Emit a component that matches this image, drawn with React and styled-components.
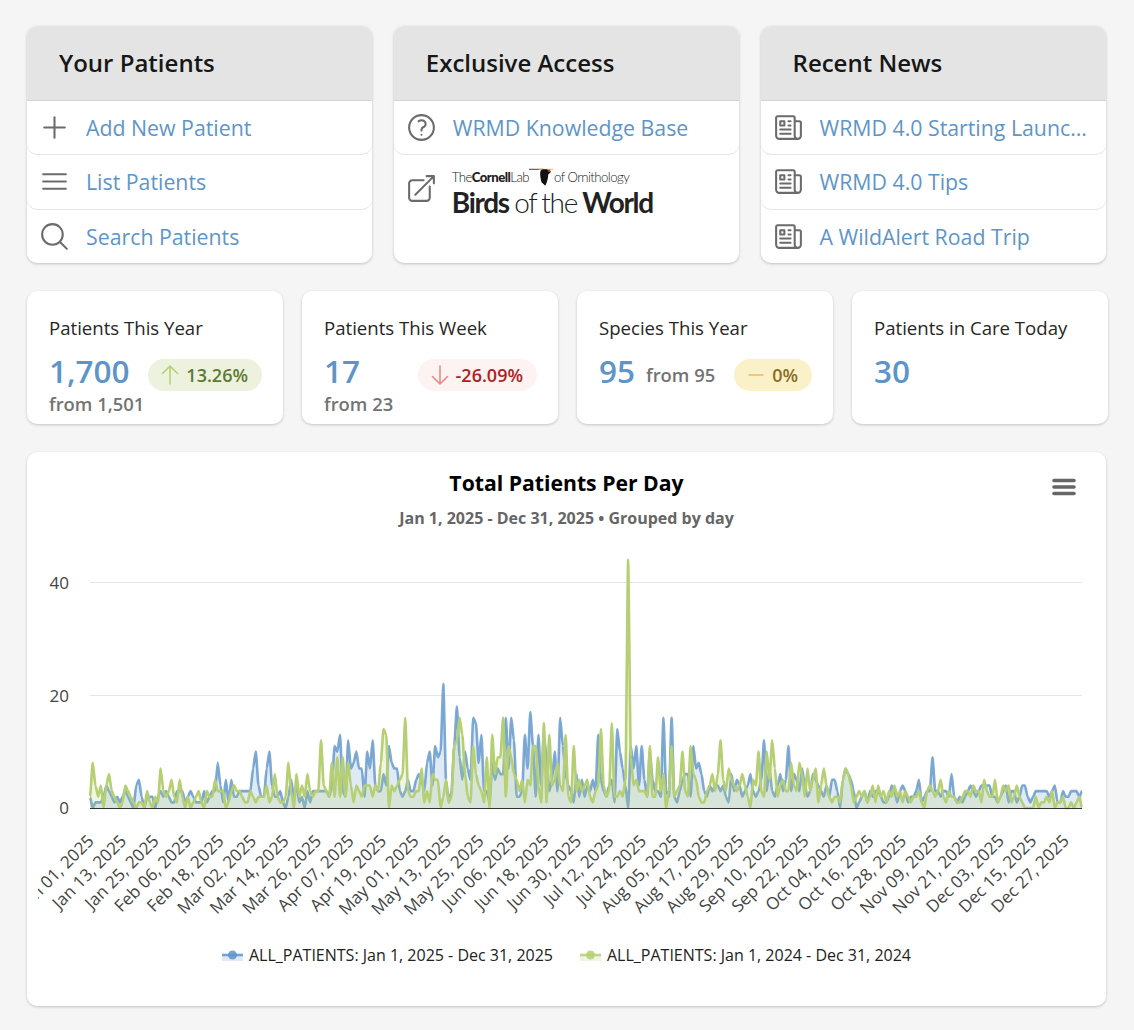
import React from "react";
import styled, { createGlobalStyle } from "styled-components";
import {
  HiOutlinePlus,
  HiOutlineBars3,
  HiOutlineMagnifyingGlass,
  HiOutlineQuestionMarkCircle,
  HiOutlineArrowTopRightOnSquare,
  HiOutlineNewspaper,
  HiOutlineArrowUp,
  HiOutlineArrowDown,
  HiOutlineMinus,
} from "react-icons/hi2";

const GlobalStyle = createGlobalStyle`
  html, body {
    margin: 0;
    background: #f5f5f5;
    font-family: "Open Sans", "Noto Sans", sans-serif;
  }
  * { box-sizing: border-box; }
`;

const Page = styled.div`
  width: 1134px;
  height: 1030px;
  padding: 26px 27px 0;
  display: flex;
  flex-direction: column;
`;

const PanelGrid = styled.div`
  width: 1079px;
  display: grid;
  grid-template-columns: repeat(3, 1fr);
  column-gap: 21.33px;
`;

const Panel = styled.section`
  height: 237px;
  background: #fff;
  border-radius: 10px;
  box-shadow: 0 1px 3px rgba(0, 0, 0, 0.22);
  overflow: hidden;
`;

const PanelHeader = styled.h2`
  margin: 0;
  height: 75px;
  padding: 0 32px 2px;
  display: flex;
  align-items: center;
  background: #e4e4e4;
  border-bottom: 1px solid #d4d4d4;
  color: #171717;
  font-size: 24px;
  font-weight: 600;
`;

const PanelRow = styled.div`
  height: ${(p) => p.$h}px;
  padding-left: 11px;
  display: flex;
  align-items: center;
  gap: 15px;
  border-radius: 0 0 10px 10px;
  box-shadow: ${(p) => (p.$last ? "none" : "0 1px 0 #e4e4e4")};
  color: #6b6b6b;
  svg { flex: none; }
`;

const PanelLink = styled.a`
  color: #5e95c9;
  font-size: 21.3px;
  white-space: nowrap;
`;

const LogoRow = styled(PanelRow)`
  height: auto;
  padding-top: 9.5px;
  align-items: flex-start;
  box-shadow: none;
  svg.open { margin-top: 8px; }
`;

const Logo = styled.div`
  color: #222;
  font-family: Lato, "Open Sans", sans-serif;
  margin-left: -1px;
`;

const LogoTop = styled.div`
  display: flex;
  align-items: center;
  height: 26px;
  font-size: 13.2px;
  letter-spacing: -0.55px;
  font-weight: 300;
  b { font-weight: 900; }
`;

const LogoMain = styled.div`
  font-size: 28px;
  line-height: 24px;
  letter-spacing: -1.3px;
  font-weight: 300;
  word-spacing: -1px;
  white-space: nowrap;
  b { font-weight: 700; }
`;

const StatGrid = styled.div`
  margin-top: 28px;
  display: grid;
  grid-template-columns: repeat(4, 256px);
  column-gap: 19px;
`;

const StatCard = styled.div`
  height: 133px;
  padding: 25px 21px 0 22px;
  background: #fff;
  border-radius: 10px;
  box-shadow: 0 1px 3px rgba(0, 0, 0, 0.2);
`;

const StatTitle = styled.div`
  color: #262626;
  font-size: 18.6px;
  line-height: 24px;
`;

const StatBody = styled.div`
  margin-top: 19px;
  height: 32px;
  display: flex;
  align-items: center;
  justify-content: space-between;
`;

const StatLeft = styled.div`
  display: flex;
  align-items: center;
  gap: 11px;
`;

const StatValue = styled.div`
  color: #5e95c9;
  font-size: 31.5px;
  font-weight: 600;
  line-height: 32px;
  margin-bottom: 9px;
`;

const StatFrom = styled.div`
  color: #737373;
  font-size: 18.4px;
  font-weight: 600;
  line-height: 24px;
  margin-top: ${(p) => (p.$under ? "1px" : "0")};
`;

const tones = {
  up: { bg: "#edf2df", fg: "#5f7a33", icon: "#b5cf72" },
  down: { bg: "#fdf3f2", fg: "#ab2420", icon: "#ef8580" },
  flat: { bg: "#fbf1c9", fg: "#8a6d24", icon: "#eab96e" },
};

const Pill = styled.div`
  height: 32px;
  padding: 0 14px 0 10px;
  display: flex;
  align-items: center;
  gap: 4px;
  border-radius: 16px;
  background: ${(p) => tones[p.$tone].bg};
  color: ${(p) => tones[p.$tone].fg};
  font-size: 18px;
  font-weight: 600;
  svg { color: ${(p) => tones[p.$tone].icon}; }
`;

const ChartCard = styled.div`
  position: relative;
  margin-top: 28px;
  width: 1079px;
  height: 554px;
  padding-top: 16px;
  background: #fff;
  border-radius: 10px;
  box-shadow: 0 1px 3px rgba(0, 0, 0, 0.2);
`;

const ChartTitle = styled.div`
  text-align: center;
  color: #000;
  font-size: 21.2px;
  font-weight: 700;
  line-height: 30px;
`;

const ChartSubtitle = styled.div`
  margin-top: 10px;
  text-align: center;
  color: #666;
  font-size: 16px;
  font-weight: 700;
  line-height: 20px;
`;

const ChartMenu = styled.svg`
  position: absolute;
  top: 26px;
  right: 30px;
`;

const PlotSvg = styled.svg`
  display: block;
  margin: 2px 0 0 11px;
`;

const Legend = styled.div`
  margin-top: 15px;
  display: flex;
  justify-content: center;
  gap: 27px;
  color: #222;
  font-size: 16px;
  line-height: 20px;
`;

const LegendItem = styled.div`
  display: flex;
  align-items: center;
  gap: 6px;
`;

const BLUE = [
  2,0,1,1,1,2,4,3,2,1, 2,1,2,3,2,1,0,4,5,2, 0,2,2,2,0,2,3,2,3,2, 1,1,3,3,3,1,2,3,2,1,
  1,1,3,1,2,3,3,8,4,1, 5,1,5,2,2,3,3,3,3,3, 7,10,4,2,2,7,10,4,2,2, 3,1,0,2,5,2,4,1,2,0,
  3,1,3,3,3,3,3,3,2,4, 11,10,13,3,2,12,7,8,10,7, 7,2,10,7,12,4,3,3,6,4, 11,8,7,7,3,2,3,5,3,3,
  5,6,5,3,8,10,4,11,9,10, 22,5,1,3,11,18,9,5,10,7, 5,16,15,8,13,3,3,1,8,5, 7,6,6,16,7,16,12,2,2,3,
  13,7,17,11,2,13,4,13,9,3, 5,10,3,16,11,6,4,3,1,6, 2,5,2,4,3,5,3,13,5,3, 2,4,5,1,14,10,7,4,0,11,
  7,11,4,11,5,2,10,5,3,3, 2,16,3,2,16,2,1,3,5,6, 6,2,11,7,8,6,3,2,4,3, 4,4,3,4,2,1,6,3,5,4,
  2,3,4,6,3,2,3,5,12,3, 7,3,2,4,6,3,5,11,3,6, 5,3,7,4,2,3,6,5,4,3, 2,4,2,5,5,3,0,5,7,6,
  5,3,0,1,2,3,1,3,2,3, 3,2,1,1,2,4,3,1,3,4, 3,1,2,2,3,5,1,2,3,3, 9,3,3,2,3,3,2,6,2,1,
  2,1,2,3,4,3,2,3,4,4, 4,4,2,2,1,2,3,4,1,3, 3,1,2,4,4,2,1,2,3,3, 3,3,3,2,3,4,1,1,3,2,
  2,3,3,3,2,3,
];

const GREEN = [
  2,8,4,2,4,0,4,6,3,2, 1,0,1,4,3,2,1,0,1,1, 0,3,1,0,2,1,7,3,2,3, 5,2,1,5,2,0,2,0,1,2,
  3,1,0,3,2,2,5,3,3,3, 0,1,3,4,3,3,2,1,1,3, 2,1,2,2,2,4,1,2,6,2, 1,1,2,8,3,0,6,2,4,2,
  6,3,2,3,3,12,4,3,2,8, 2,9,2,9,2,8,4,1,4,3, 2,4,4,4,2,4,3,8,14,13, 0,4,3,4,5,6,16,3,2,2,
  3,3,7,1,3,1,6,5,5,0, 2,5,1,2,11,12,16,13,6,2, 1,11,6,4,3,1,9,0,13,6, 9,9,16,2,11,9,6,5,3,5,
  1,5,4,11,11,4,1,15,1,13, 4,5,8,4,3,13,2,1,11,3, 5,3,4,5,2,1,3,4,14,4, 2,3,15,2,2,3,2,5,44,9,
  4,5,3,3,3,2,11,2,2,9, 3,6,0,3,11,2,3,4,10,3, 2,11,6,5,2,1,1,3,4,6, 3,6,12,5,3,7,5,4,3,4,
  6,4,2,0,5,4,10,3,2,10, 5,12,7,2,4,5,3,3,8,4, 3,8,6,2,7,3,5,7,1,4, 7,4,2,1,2,2,1,5,7,6,
  4,1,2,3,2,3,1,2,4,1, 4,2,3,1,3,2,4,2,3,1, 3,2,1,2,2,3,1,0,3,4, 3,2,3,5,2,1,3,2,2,1,
  1,2,3,3,2,4,3,3,1,5, 3,2,2,5,1,2,4,3,4,1, 2,4,2,1,0,0,0,0,2,0, 1,1,2,1,3,0,1,1,2,0,
  0,1,0,1,2,0,
];

const TICKS = [
  "Jan 01, 2025","Jan 13, 2025","Jan 25, 2025","Feb 06, 2025","Feb 18, 2025","Mar 02, 2025",
  "Mar 14, 2025","Mar 26, 2025","Apr 07, 2025","Apr 19, 2025","May 01, 2025","May 13, 2025",
  "May 25, 2025","Jun 06, 2025","Jun 18, 2025","Jun 30, 2025","Jul 12, 2025","Jul 24, 2025",
  "Aug 05, 2025","Aug 17, 2025","Aug 29, 2025","Sep 10, 2025","Sep 22, 2025","Oct 04, 2025",
  "Oct 16, 2025","Oct 28, 2025","Nov 09, 2025","Nov 21, 2025","Dec 03, 2025","Dec 15, 2025",
  "Dec 27, 2025",
];

// plot area, in page coordinates because the viewBox below uses them
const X0 = 90;
const X1 = 1082;
const Y0 = 808;
const PER_UNIT = 5.64;

function toPoints(values) {
  const step = (X1 - X0) / (values.length - 1);
  return values.map((v, i) => [X0 + i * step, Y0 - v * PER_UNIT]);
}

function linePath(points) {
  let d = `M${points[0][0]} ${points[0][1]}`;
  for (let i = 1; i < points.length; i++) {
    const [x0, y0] = points[i - 1];
    const [x1, y1] = points[i];
    const hx = (x1 - x0) / 5;
    d += `C${x0 + hx} ${y0} ${x1 - hx} ${y1} ${x1} ${y1}`;
  }
  return d;
}

function Series({ values, color, opacity }) {
  const points = toPoints(values);
  const line = linePath(points);
  return (
    <>
      <path d={`${line}L${X1} ${Y0}L${X0} ${Y0}Z`} fill={color} fillOpacity="0.2" />
      <path d={line} fill="none" stroke={color} strokeOpacity={opacity} strokeWidth="2.6" strokeLinejoin="round" />
    </>
  );
}

function Plot() {
  return (
    <PlotSvg width="1060" height="400" viewBox="38 530 1060 400">
      <line x1={X0} x2={X1} y1="582.5" y2="582.5" stroke="#e6e6e6" />
      <line x1={X0} x2={X1} y1="695.5" y2="695.5" stroke="#e6e6e6" />
      <Series values={BLUE} color="#5e95c9" opacity="0.8" />
      <Series values={GREEN} color="#b5cf72" opacity="1" />
      <line x1={X0} x2={X1} y1="808.5" y2="808.5" stroke="#333" />
      <g fontFamily='"Open Sans", sans-serif' fontSize="17" fill="#444">
        <text x="69" y="589" textAnchor="end">40</text>
        <text x="69" y="702" textAnchor="end">20</text>
        <text x="69" y="814" textAnchor="end">0</text>
        {TICKS.map((t, i) => {
          const x = 95 + i * 32.5;
          return (
            <text key={t} x={x} y="842" textAnchor="end" transform={`rotate(-45 ${x} 842)`}>
              {t}
            </text>
          );
        })}
      </g>
    </PlotSvg>
  );
}

function LegendSymbol({ color }) {
  return (
    <svg width="21" height="20" viewBox="0 0 21 20">
      <rect x="0" y="10" width="21" height="6" fill={color} fillOpacity="0.2" />
      <line x1="0" x2="21" y1="10" y2="10" stroke={color} strokeWidth="2.6" strokeOpacity="0.85" />
      <circle cx="10.5" cy="10" r="4.5" fill={color} fillOpacity="0.85" />
    </svg>
  );
}

function BirdMark() {
  return (
    <svg width="25" height="20" viewBox="0 0 26 20">
      <path d="M0 2H15" stroke="#222" strokeWidth="0.9" />
      <path d="M10 2H25" stroke="#e3c52c" strokeWidth="1" />
      <path d="M12 3.5C14 1.5 19 1.5 21 3.5L23 4.5L20 7.5C20 11 19 15 17 19L13 15.5C12 11.5 11 6.5 12 3.5Z" fill="#111" />
      <circle cx="21" cy="3.5" r="1.3" fill="#c9412f" />
    </svg>
  );
}

function PanelIcon({ as: Icon }) {
  return <Icon size={33} strokeWidth={1.5} />;
}

function StatPill({ tone, icon: Icon, children }) {
  return (
    <Pill $tone={tone}>
      <Icon size={24} strokeWidth={1.5} />
      {children}
    </Pill>
  );
}

export default function App() {
  return (
    <Page>
      <GlobalStyle />
      <PanelGrid>
        <Panel>
          <PanelHeader>Your Patients</PanelHeader>
          <PanelRow $h={53}><PanelIcon as={HiOutlinePlus} /><PanelLink>Add New Patient</PanelLink></PanelRow>
          <PanelRow $h={55}><PanelIcon as={HiOutlineBars3} /><PanelLink>List Patients</PanelLink></PanelRow>
          <PanelRow $h={54} $last><PanelIcon as={HiOutlineMagnifyingGlass} /><PanelLink>Search Patients</PanelLink></PanelRow>
        </Panel>
        <Panel>
          <PanelHeader>Exclusive Access</PanelHeader>
          <PanelRow $h={53}><PanelIcon as={HiOutlineQuestionMarkCircle} /><PanelLink>WRMD Knowledge Base</PanelLink></PanelRow>
          <LogoRow $last>
            <HiOutlineArrowTopRightOnSquare className="open" size={33} strokeWidth={1.5} />
            <Logo>
              <LogoTop>
                The<b>Cornell</b>Lab<BirdMark />of Ornithology
              </LogoTop>
              <LogoMain>
                <b>Birds</b> of the <b>World</b>
              </LogoMain>
            </Logo>
          </LogoRow>
        </Panel>
        <Panel>
          <PanelHeader>Recent News</PanelHeader>
          <PanelRow $h={53}><PanelIcon as={HiOutlineNewspaper} /><PanelLink>WRMD 4.0 Starting Launc...</PanelLink></PanelRow>
          <PanelRow $h={55}><PanelIcon as={HiOutlineNewspaper} /><PanelLink>WRMD 4.0 Tips</PanelLink></PanelRow>
          <PanelRow $h={54} $last><PanelIcon as={HiOutlineNewspaper} /><PanelLink>A WildAlert Road Trip</PanelLink></PanelRow>
        </Panel>
      </PanelGrid>

      <StatGrid>
        <StatCard>
          <StatTitle>Patients This Year</StatTitle>
          <StatBody>
            <StatValue>1,700</StatValue>
            <StatPill tone="up" icon={HiOutlineArrowUp}>13.26%</StatPill>
          </StatBody>
          <StatFrom $under>from 1,501</StatFrom>
        </StatCard>
        <StatCard>
          <StatTitle>Patients This Week</StatTitle>
          <StatBody>
            <StatValue>17</StatValue>
            <StatPill tone="down" icon={HiOutlineArrowDown}>-26.09%</StatPill>
          </StatBody>
          <StatFrom $under>from 23</StatFrom>
        </StatCard>
        <StatCard>
          <StatTitle>Species This Year</StatTitle>
          <StatBody>
            <StatLeft>
              <StatValue>95</StatValue>
              <StatFrom>from 95</StatFrom>
            </StatLeft>
            <StatPill tone="flat" icon={HiOutlineMinus}>0%</StatPill>
          </StatBody>
        </StatCard>
        <StatCard>
          <StatTitle>Patients in Care Today</StatTitle>
          <StatBody>
            <StatValue>30</StatValue>
          </StatBody>
        </StatCard>
      </StatGrid>

      <ChartCard>
        <ChartTitle>Total Patients Per Day</ChartTitle>
        <ChartSubtitle>Jan 1, 2025 - Dec 31, 2025 • Grouped by day</ChartSubtitle>
        <ChartMenu width="24" height="18" viewBox="0 0 24 18">
          <path d="M2 2.5H22M2 9H22M2 15.5H22" stroke="#666" strokeWidth="3.6" strokeLinecap="round" />
        </ChartMenu>
        <Plot />
        <Legend>
          <LegendItem><LegendSymbol color="#5e95c9" />ALL_PATIENTS: Jan 1, 2025 - Dec 31, 2025</LegendItem>
          <LegendItem><LegendSymbol color="#b5cf72" />ALL_PATIENTS: Jan 1, 2024 - Dec 31, 2024</LegendItem>
        </Legend>
      </ChartCard>
    </Page>
  );
}
